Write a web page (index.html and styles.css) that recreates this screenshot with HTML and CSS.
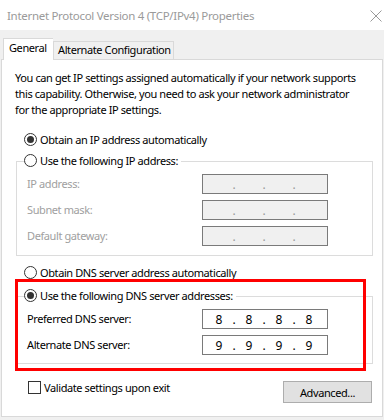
FILE: index.html
```html
<!DOCTYPE html>
<html>
<head>
<meta charset="utf-8">
<link rel="stylesheet" href="styles.css">
</head>
<body>
<div class="window">
  <div class="titlebar">
    <span class="title">Internet Protocol Version 4 (TCP/IPv4) Properties</span>
    <svg class="close" width="12" height="12" viewBox="0 0 12 12"><path d="M0.5 0.5 L11.5 11.5 M11.5 0.5 L0.5 11.5" stroke="#9a9a9a" stroke-width="1" fill="none"/></svg>
  </div>
  <div class="body">
    <div class="tabs">
      <div class="tab active">General</div>
      <div class="tab">Alternate Configuration</div>
    </div>
    <div class="panel">
      <p class="desc">You can get IP settings assigned automatically if your network supports<br>this capability. Otherwise, you need to ask your network administrator<br>for the appropriate IP settings.</p>

      <div class="radio-row first"><span class="radio checked"></span><span>Obtain an IP address automatically</span></div>

      <div class="group group-ip">
        <div class="legend"><span class="radio"></span><span>Use the following IP address:</span></div>
        <div class="fields">
          <span class="label disabled">IP address:</span>
          <span class="ipbox disabled"><span class="seg"></span><span class="dot">.</span><span class="seg"></span><span class="dot">.</span><span class="seg"></span><span class="dot">.</span><span class="seg"></span></span>
          <span class="label disabled">Subnet mask:</span>
          <span class="ipbox disabled"><span class="seg"></span><span class="dot">.</span><span class="seg"></span><span class="dot">.</span><span class="seg"></span><span class="dot">.</span><span class="seg"></span></span>
          <span class="label disabled">Default gateway:</span>
          <span class="ipbox disabled"><span class="seg"></span><span class="dot">.</span><span class="seg"></span><span class="dot">.</span><span class="seg"></span><span class="dot">.</span><span class="seg"></span></span>
        </div>
      </div>

      <div class="radio-row dns-auto"><span class="radio"></span><span>Obtain DNS server address automatically</span></div>

      <div class="group group-dns">
        <div class="legend"><span class="radio checked"></span><span>Use the following DNS server addresses:</span></div>
        <div class="fields">
          <span class="label">Preferred DNS server:</span>
          <span class="ipbox"><span class="seg">8</span><span class="dot">.</span><span class="seg">8</span><span class="dot">.</span><span class="seg">8</span><span class="dot">.</span><span class="seg">8</span></span>
          <span class="label">Alternate DNS server:</span>
          <span class="ipbox"><span class="seg">9</span><span class="dot">.</span><span class="seg">9</span><span class="dot">.</span><span class="seg">9</span><span class="dot">.</span><span class="seg">9</span></span>
        </div>
      </div>

      <div class="bottom-row">
        <div class="check-row"><span class="checkbox"></span><span>Validate settings upon exit</span></div>
        <div class="button">Advanced...</div>
      </div>

      <div class="highlight"></div>
    </div>
  </div>
</div>
</body>
</html>
```

FILE: styles.css
```css
* { box-sizing: border-box; }
html, body { margin: 0; padding: 0; }
body {
  width: 384px;
  height: 420px;
  overflow: hidden;
  background: #f0f0f0;
  font-family: "Noto Sans", "Open Sans", sans-serif;
  font-size: 11px;
  letter-spacing: -0.4px;
  color: #000;
}
.window { width: 384px; height: 420px; }
.titlebar {
  height: 30px;
  background: #fff;
  display: flex;
  align-items: center;
  padding: 1px 2px 0 7px;
}
.title { color: #9a9a9a; font-size: 11.5px; letter-spacing: -0.3px; }
.close { margin-left: auto; margin-top: 0; }
.body { padding: 8px 0 0 1px; }
.tabs {
  display: flex;
  align-items: flex-end;
  height: 21px;
  margin-left: 2px;
}
.tab {
  height: 18px;
  width: 121px;
  border: 1px solid #d9d9d9;
  border-bottom: none;
  background: #f0f0f0;
  padding-left: 4px;
  line-height: 16px;
  white-space: nowrap;
}
.tab.active {
  width: 50px;
  height: 22px;
  margin-bottom: -1px;
  background: #fff;
  border-right: none;
  padding-left: 5px;
  line-height: 18px;
  position: relative;
  z-index: 1;
}
.panel {
  position: relative;
  width: 382px;
  height: 358px;
  background: #fff;
  border: 1px solid #d9d9d9;
  padding: 10px 9px 0 13px;
}
.desc { margin: 0; line-height: 16px; white-space: nowrap; }
.radio-row, .legend, .check-row {
  display: flex;
  align-items: center;
  height: 16px;
  white-space: nowrap;
}
.radio-row { padding-left: 9px; }
.radio-row.first { margin-top: 13px; }
.radio-row.dns-auto { margin-top: 8px; }
.radio {
  width: 13px;
  height: 13px;
  border: 1px solid #333;
  border-radius: 50%;
  background: #fff;
  margin-right: 3px;
  display: flex;
  align-items: center;
  justify-content: center;
  flex: none;
}
.radio.checked::after {
  content: "";
  width: 7px;
  height: 7px;
  border-radius: 50%;
  background: #333;
}
.group {
  margin-left: 1px;
  border: 1px solid #dcdcdc;
  padding: 0 0 0 9px;
}
.group-ip { margin-top: 14px; padding-bottom: 9px; }
.group-dns { margin-top: 16px; padding-bottom: 8px; }
.legend {
  margin-top: -10px;
  margin-left: -2px;
  padding: 0 3px 0 0;
  background: #fff;
  width: max-content;
}
.fields {
  display: grid;
  grid-template-columns: 175px 126px;
  row-gap: 6px;
  margin-top: 6px;
  padding-left: 1px;
}
.label { line-height: 20px; white-space: nowrap; }
.disabled { color: #a0a0a0; }
.ipbox {
  height: 20px;
  border: 1px solid #7a7a7a;
  background: #fff;
  display: flex;
  align-items: center;
  padding-left: 2px;
  color: #000;
  font-size: 12px;
  letter-spacing: 0;
}
.ipbox.disabled { background: #f0f0f0; color: #9a9a9a; }
.seg { width: 28px; text-align: center; }
.dot { width: 2px; text-align: center; display: flex; justify-content: center; }
.bottom-row {
  margin-top: 17px;
  display: flex;
  justify-content: space-between;
  align-items: flex-start;
  padding-right: 1px;
}
.check-row { padding-left: 13px; height: 13px; }
.checkbox {
  width: 13px;
  height: 13px;
  border: 1px solid #333;
  background: #fff;
  margin-right: 3px;
  flex: none;
}
.button {
  width: 89px;
  height: 22px;
  background: #e1e1e1;
  border: 1px solid #adadad;
  display: flex;
  align-items: center;
  justify-content: center;
}
.highlight {
  position: absolute;
  left: 13px;
  top: 219px;
  width: 351px;
  height: 92px;
  border: 3px solid #ff0000;
  pointer-events: none;
}
```
